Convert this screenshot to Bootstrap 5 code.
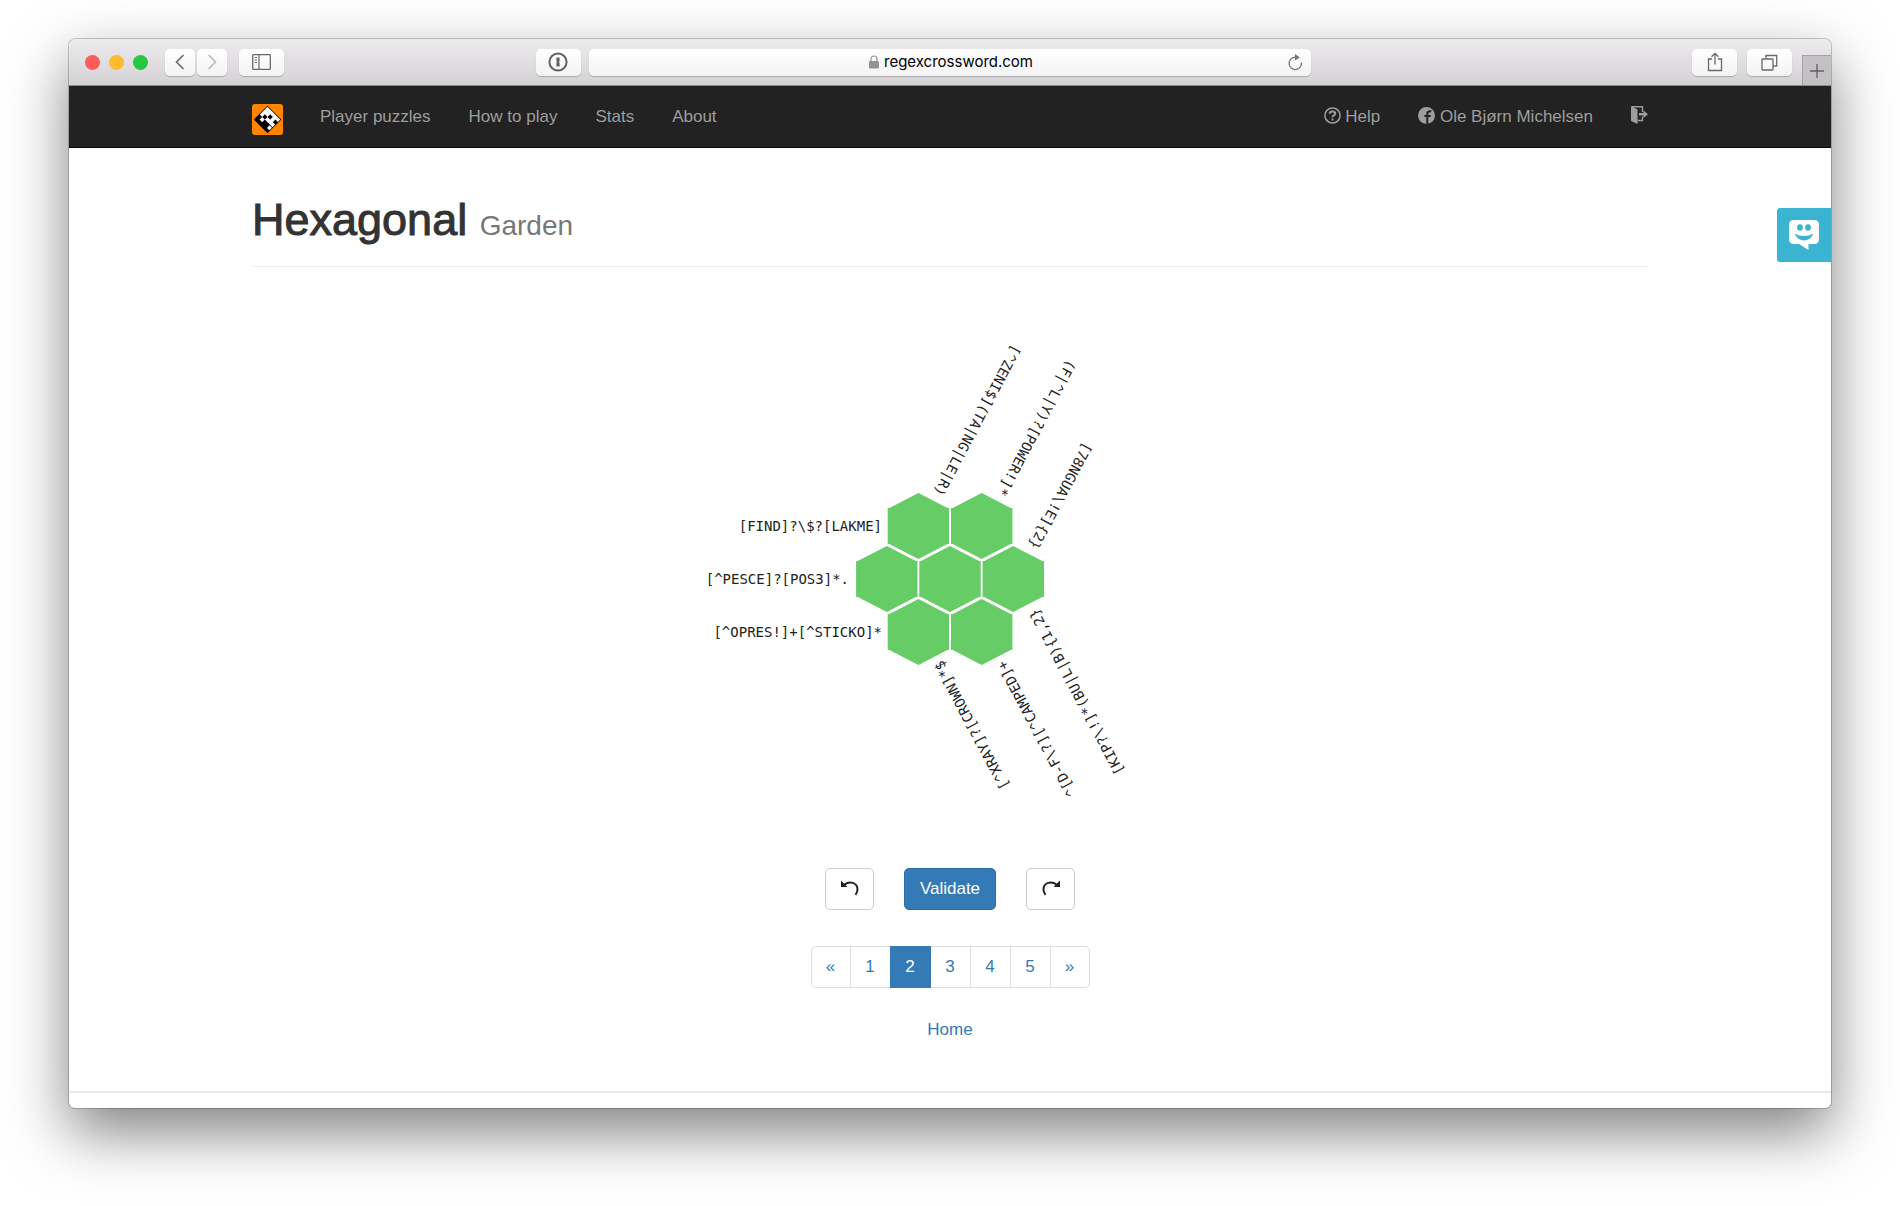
<!DOCTYPE html>
<html lang="en">
<head>
<meta charset="utf-8">
<meta name="viewport" content="width=device-width, initial-scale=1">
<title>Regex Crossword - Hexagonal Garden</title>
<link href="https://cdn.jsdelivr.net/npm/bootstrap@5.3.0/dist/css/bootstrap.min.css" rel="stylesheet">
<style>
  body { font-family: "Liberation Sans", Arial, sans-serif; font-size: 17px; line-height: 24px; color: #333; background: #fff; padding: 39px 69px 98px; }
  .mac-window { min-height: calc(100vh - 137px); border-radius: 7px 7px 6px 6px; background: #fff; box-shadow: 0 0 0 1px rgba(0,0,0,.2), 0 24px 60px rgba(0,0,0,.5); }
  .window-clip { border-radius: inherit; overflow: hidden; }

  /* browser toolbar */
  .mac-toolbar { display: grid; grid-template-columns: 1fr 41% 1fr; height: 47px; background: linear-gradient(#edebee, #d4d2d5); border-bottom: 1px solid #8b898c; }
  .light { width: 15px; height: 15px; border-radius: 50%; margin-right: 9px; }
  .light-red { background: #fc5b57; }
  .light-yellow { background: #fdbc2e; }
  .light-green { background: #27c840; }
  .mac-btn { display: flex; align-items: center; justify-content: center; width: 45px; height: 27px; padding: 0; border: 0; border-radius: 5px; background: linear-gradient(#fff, #f4f3f4); box-shadow: 0 1px 1px rgba(0,0,0,.22); color: #6a686b; }
  .mac-btn-sm { width: 30px; }
  .history-btns { gap: 2px; margin: 0 12px 0 8px; }
  .tab-btns { gap: 10px; margin-right: 10px; }
  .mac-url { height: 27px; border-radius: 5px; background: linear-gradient(#fff, #f4f3f4); box-shadow: 0 1px 1px rgba(0,0,0,.22); color: #000; font-family: Inter, "Liberation Sans", sans-serif; font-size: 15px; }
  .new-tab { width: 29px; height: 30px; padding: 0; border: 0; border-left: 1px solid #a5a3a6; border-top: 1px solid #a5a3a6; background: #c3c1c4; color: #626062; }

  /* site navigation */
  .site-nav { background: #222; border-bottom: 1px solid #080808; height: 62px; padding: 0; }
  .site-width { width: 100%; max-width: 1396px; margin: 0 auto; }
  .site-logo { margin: 18px 18px 0 0; }
  .site-nav .nav-link { color: #9d9d9d; padding: 19px 19px 18px; white-space: nowrap; }
  .site-nav .nav-link svg { vertical-align: -2px; }

  .page-title { padding: 46px 0 14px; border-bottom: 1px solid #eee; }
  .page-title h1 { margin: 0; font-size: 45px; line-height: 52px; font-weight: 400; -webkit-text-stroke: 1px #333; }
  .page-title small { font-size: 28px; color: #777; -webkit-text-stroke: 0; }

  .puzzle { margin-top: 62px; }
  .puzzle text { font-family: "DejaVu Sans Mono", monospace; font-size: 14px; fill: #222; text-anchor: end; dominant-baseline: central; }

  .puzzle-tools { gap: 30px; margin-top: 59px; }
  .btn-tool { width: 49px; height: 42px; padding: 0 0 4px; border: 1px solid #ccc; border-radius: 5px; background: #fff; color: #222; }
  .btn-validate { width: 92px; height: 42px; padding: 0; border: 1px solid #2e6da4; border-radius: 5px; background: #337ab7; color: #fff; font-size: 17px; }
  .puzzle-pages { --bs-pagination-font-size: 17px; --bs-pagination-color: #337ab7; --bs-pagination-border-color: #ddd; --bs-pagination-active-bg: #337ab7; --bs-pagination-active-border-color: #337ab7; --bs-pagination-border-radius: 5px; margin: 36px 0 30px; }
  .puzzle-pages .page-link { width: 41px; height: 42px; padding: 8px 0; text-align: center; }
  .puzzle-pages .page-edge { width: 40px; }
  .home-link { color: #337ab7; text-decoration: none; }
  .page-end { margin-top: 49px; border-top: 2px solid #eaeaea; height: 15px; }

  .chat-tab { position: absolute; right: 0; top: 60px; width: 54px; height: 54px; padding: 0; border: 0; border-radius: 3px 0 0 3px; background: #3ab4d0; }
</style>
<script src="https://cdn.jsdelivr.net/npm/bootstrap@5.3.0/dist/js/bootstrap.bundle.min.js"></script>
</head>
<body>
<div class="mac-window">
<div class="window-clip">

  <header class="mac-toolbar align-items-center">
    <div class="d-flex align-items-center ps-3">
      <span class="light light-red"></span>
      <span class="light light-yellow"></span>
      <span class="light light-green"></span>
      <div class="history-btns d-flex">
        <button class="mac-btn mac-btn-sm" aria-label="Back"><svg width="10" height="16" viewBox="0 0 10 16" fill="none" stroke="currentColor" stroke-width="1.6"><path d="M8.500 1L1.500 8L8.500 15"/></svg></button>
        <button class="mac-btn mac-btn-sm" aria-label="Forward"><svg width="10" height="16" viewBox="0 0 10 16" fill="none" stroke="#b9b7ba" stroke-width="1.600"><path d="M1.500 1L8.500 8L1.500 15"/></svg></button>
      </div>
      <button class="mac-btn me-auto" aria-label="Sidebar"><svg width="19" height="16" viewBox="0 0 19 16" fill="none" stroke="currentColor"><rect x=".7" y=".7" width="17.600" height="14.600" rx=".5" stroke-width="1.300"/><path d="M7 1V15" stroke-width="1.200"/><path d="M2.600 3.500H5M2.600 6H5M2.600 8.500H5"/></svg></button>
      <button class="mac-btn me-2" aria-label="Password manager"><svg width="20" height="20" viewBox="0 0 20 20"><circle cx="10" cy="10" r="8.600" fill="none" stroke="#636165" stroke-width="2"/><path d="M8.600 5.500H11.600V9L11 10L11.600 11V14.500H8.400V11L9 10L8.400 9V5.500Z" fill="#636165"/></svg></button>
    </div>
    <div class="mac-url d-flex align-items-center px-2">
      <div class="flex-grow-1 d-flex align-items-center justify-content-center gap-1 ps-3">
        <svg width="12" height="14" viewBox="0 0 12 14"><rect x="1" y="6" width="10" height="7.500" rx="1" fill="#949295"/><path d="M3 6.500V4A3 3 0 0 1 9 4V6.500" fill="none" stroke="#949295" stroke-width="1.200"/></svg>
        <span>regexcrossword.com</span>
      </div>
      <svg width="15" height="17" viewBox="0 0 15 17"><path d="M13.400 8.500A6.200 6.200 0 1 1 7.200 3.200H8.500" fill="none" stroke="#767477" stroke-width="1.300"/><path d="M7 0L11.800 3.400L7 6.600Z" fill="#767477"/></svg>
    </div>
    <div class="d-flex align-items-center justify-content-end h-100">
      <div class="tab-btns d-flex">
        <button class="mac-btn" aria-label="Share"><svg width="16" height="20" viewBox="0 0 16 20" fill="none" stroke="currentColor" stroke-width="1.300"><path d="M5 7H1.500V18.500H14.500V7H11M8 12.500V1.500M4.500 4.800L8 1.300L11.500 4.800"/></svg></button>
        <button class="mac-btn" aria-label="Tabs"><svg width="17" height="17" viewBox="0 0 17 17" fill="none" stroke="currentColor" stroke-width="1.300"><rect x="1" y="5" width="11" height="11" rx=".5"/><path d="M5 5V1.500H15.700V12H12"/></svg></button>
      </div>
      <button class="new-tab align-self-end d-flex align-items-center justify-content-center" aria-label="New tab"><svg width="14" height="14" viewBox="0 0 14 14" stroke="currentColor" stroke-width="1.300"><path d="M0 7H14M7 0V14"/></svg></button>
    </div>
  </header>

  <nav class="site-nav">
    <div class="site-width d-flex align-items-start">
      <a href="#" class="site-logo d-flex" aria-label="Regex Crossword">
        <svg width="31" height="31" viewBox="0 0 31 31">
          <rect width="31" height="31" rx="3" fill="#ff8400"/>
          <g transform="translate(15.500 2.300) rotate(45) scale(3.740)">
            <rect x="-.1" y="-.1" width="5.200" height="5.200" fill="#000"/>
            <path fill="#fff" d="M.1 .1H4.900V1H4V2H3V1H2V2H1V3H.1ZM2 2H3V3H2ZM4 2H4.900V3H4ZM1 3H2V4H1ZM3 3H4V2H3ZM4 3.200H4.900V4.200H4Z"/>
            <path d="M1 0V1M2 0V1M3 0V1M4 0V1M0 1H5M0 2H1" stroke="#999" stroke-width=".08"/>
          </g>
        </svg>
      </a>
      <a class="nav-link" href="#">Player puzzles</a>
      <a class="nav-link" href="#">How to play</a>
      <a class="nav-link" href="#">Stats</a>
      <a class="nav-link me-auto" href="#">About</a>
      <a class="nav-link" href="#"><svg width="17" height="17" viewBox="0 0 17 17" fill="none" stroke="currentColor"><circle cx="8.500" cy="8.500" r="7.600" stroke-width="1.500"/><path d="M5.700 6.800C5.700 3.700 11.200 3.900 11.200 6.600C11.200 8.400 8.500 8.200 8.500 10.300" stroke-width="2"/><path d="M8.500 11.500V13.500" stroke-width="2"/></svg> Help</a>
      <a class="nav-link" href="#"><svg width="17" height="17" viewBox="0 0 17 17"><circle cx="8.500" cy="8.500" r="8.500" fill="currentColor"/><path d="M13.300 4.300H11.800C10 4.300 9.300 5.200 9.300 6.800V17M6.400 8.900H12.800" fill="none" stroke="#222" stroke-width="2"/></svg> Ole Bjørn Michelsen</a>
      <a class="nav-link pe-0" href="#" aria-label="Log out"><svg width="17" height="18" viewBox="0 0 17 18"><path d="M0 0L6.500 3.500V18L0 15Z" fill="currentColor"/><path d="M1 .8H11.500V6M11.500 10.500V14.500H6.500" fill="none" stroke="currentColor" stroke-width="1.400"/><path d="M8 7H12.500V4.500L17 8.200L12.500 12V9.500H8Z" fill="currentColor"/></svg></a>
    </div>
  </nav>

  <div class="position-relative">
    <button class="chat-tab" aria-label="Chat"><svg width="30" height="32" viewBox="0 0 30 32"><path d="M5 1H25Q30 1 30 6V20Q30 25 25 25H19.500V31L10 25H5Q0 25 0 20V6Q0 1 5 1Z" fill="#fff"/><g fill="#3ab4d0"><ellipse cx="11" cy="8.500" rx="2.900" ry="3.300"/><ellipse cx="19" cy="8.500" rx="2.900" ry="3.300"/><path d="M5.500 14.500Q15 19.500 24.500 14.500Q21 21.500 15 21.500Q9 21.500 5.500 14.500Z"/></g></svg></button>

    <main class="site-width">
      <div class="page-title">
        <h1>Hexagonal <small>Garden</small></h1>
      </div>

      <div class="puzzle d-flex justify-content-center">
        <svg width="520" height="480" viewBox="0 0 520 480" role="img" aria-label="Hexagonal crossword">
          <defs><path id="cell" d="M0-33L29-18H30.700V18H29L0 33L-29 18H-30.700V-18H-29Z" fill="#66cc66"/></defs>
          <use href="#cell" x="228.400" y="197"/>
          <use href="#cell" x="291.700" y="197"/>
          <use href="#cell" x="196.800" y="250"/>
          <use href="#cell" x="260" y="250"/>
          <use href="#cell" x="323.300" y="250"/>
          <use href="#cell" x="228.400" y="303"/>
          <use href="#cell" x="291.700" y="303"/>
          <text x="192" y="197">[FIND]?\$?[LAKME]</text>
          <text x="159" y="250">[^PESCE]?[POS3]*.</text>
          <text x="192" y="303">[^OPRES!]+[^STICKO]*</text>
          <text transform="translate(248 166) rotate(118)">[^ZENI$](TA|NG|LE|R)</text>
          <text transform="translate(311 166) rotate(118)">(F|^L|Y)?[POWER!]*</text>
          <text transform="translate(343 219) rotate(118)">[78NGUA\!E]{2}</text>
          <text transform="translate(248 333) rotate(-118)">[^XRAY]?[CROWN]*$</text>
          <text transform="translate(311 333) rotate(-118)">^[D-F\?][^CAMPED]+</text>
          <text transform="translate(343 281) rotate(-118)">[KIP?\!]*(BU|L|B){1,2}</text>
        </svg>
      </div>

      <div class="puzzle-tools d-flex justify-content-center">
        <button class="btn btn-tool" aria-label="Undo"><svg width="18" height="16" viewBox="0 0 18 16"><path d="M3.500 4.500C8.500 .5 16.500 2.500 16.500 9.500C16.500 11.500 15.500 13.500 14.500 14.800" fill="none" stroke="currentColor" stroke-width="2"/><path d="M0 .5V7H6.500Z" fill="currentColor"/></svg></button>
        <button class="btn btn-validate">Validate</button>
        <button class="btn btn-tool" aria-label="Redo"><svg width="18" height="16" viewBox="0 0 18 16"><path d="M14.500 4.500C9.500 .5 1.500 2.500 1.500 9.500C1.500 11.500 2.500 13.500 3.500 14.800" fill="none" stroke="currentColor" stroke-width="2"/><path d="M18 .5V7H11.500Z" fill="currentColor"/></svg></button>
      </div>

      <nav aria-label="Puzzle pages">
        <ul class="pagination justify-content-center puzzle-pages">
          <li class="page-item"><a class="page-link page-edge" href="#" aria-label="Previous">«</a></li>
          <li class="page-item"><a class="page-link" href="#">1</a></li>
          <li class="page-item active"><a class="page-link" href="#" aria-current="page">2</a></li>
          <li class="page-item"><a class="page-link" href="#">3</a></li>
          <li class="page-item"><a class="page-link" href="#">4</a></li>
          <li class="page-item"><a class="page-link" href="#">5</a></li>
          <li class="page-item"><a class="page-link page-edge" href="#" aria-label="Next">»</a></li>
        </ul>
      </nav>

      <div class="text-center"><a class="home-link" href="#">Home</a></div>
    </main>
    <div class="page-end"></div>
  </div>

</div>
</div>
</body>
</html>
